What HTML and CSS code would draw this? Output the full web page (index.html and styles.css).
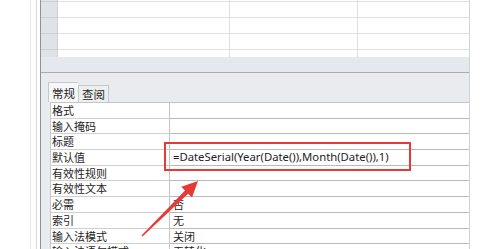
FILE: index.html
```html
<!DOCTYPE html>
<html>
<head>
    <title>表属性 - 默认值</title>
    <meta charset="UTF-8">
    <link rel="stylesheet" href="styles.css">
</head>
<body>
    <div class="window">
        <div class="frame">
            <div class="sheet">
                <div class="grid">
                    <div class="sel r1"></div><div class="cell r1"></div><div class="cell r1"></div><div class="cell r1 last"></div>
                    <div class="sel"></div><div class="cell"></div><div class="cell"></div><div class="cell last"></div>
                    <div class="sel"></div><div class="cell"></div><div class="cell"></div><div class="cell last"></div>
                    <div class="sel"></div><div class="cell"></div><div class="cell"></div><div class="cell last"></div>
                    <div class="sel end"></div><div class="cell end"></div><div class="cell end"></div><div class="cell end last"></div>
                </div>
                <div class="band"></div>

                <div class="props">
                    <div class="tabs">
                        <span class="tab active">常规</span>
                        <span class="tab">查阅</span>
                    </div>
                    <div class="prop-table">
                        <div class="label">格式</div><div class="value"></div>
                        <div class="label">输入掩码</div><div class="value"></div>
                        <div class="label">标题</div><div class="value"></div>
                        <div class="label">默认值</div><div class="value formula">=DateSerial(Year(Date()),Month(Date()),1)</div>
                        <div class="label">有效性规则</div><div class="value"></div>
                        <div class="label">有效性文本</div><div class="value"></div>
                        <div class="label">必需</div><div class="value">否</div>
                        <div class="label">索引</div><div class="value">无</div>
                        <div class="label">输入法模式</div><div class="value">关闭</div>
                        <div class="label">输入法语句模式</div><div class="value">无转化</div>
                    </div>
                </div>
            </div>
        </div>
    </div>

    <!-- annotation: red box + arrow -->
    <div class="callout"></div>
    <svg class="arrow" width="499" height="249" viewBox="0 0 499 249">
        <polygon points="198,181 192,197.6 188.2,193.8 142.5,236.5 141.5,235.5 185,190.6 181.3,186.8" fill="#e63a36"/>
    </svg>
</body>
</html>
```

FILE: styles.css
```css
* { box-sizing: border-box; }
body { margin: 0; background: #fff; height: 249px; overflow: hidden; font-family: "Noto Sans CJK SC", sans-serif; color: #1e1e1e; }

.window { margin-left: 30px; width: 440px; height: 249px; border-left: 1px solid #e6e6e6; padding-left: 5px; }
.frame { height: 100%; border-left: 1px solid #dadada; padding-left: 3px; }
.sheet { height: 100%; border-left: 1px solid #8e939a; border-right: 1px solid #cfd2d6; background: #e9ebee; }

.grid { display: grid; grid-template-columns: 17px 172px 128px 1fr; grid-template-rows: 2px 16px 16px 16px 7px; background: #fff; }
.grid .sel { background: #dfe3e8; border-right: 1px solid #cdd1d6; border-bottom: 1px solid #cdd1d6; }
.grid .cell { border-right: 1px solid #dcdfe3; border-bottom: 1px solid #dcdfe3; }
.grid .last { border-right: none; }
.grid .end { border-bottom: none; }

.band { height: 16px; background: #e5e8ec; border-bottom: 1px solid #a9adb3; }

.props { padding: 9px 0 0 7px; }
.tabs { display: flex; align-items: flex-end; height: 20px; font-size: 11.5px; line-height: 16px; }
.tab { padding: 0 3px; height: 17px; border: 1px solid #c6c8cc; border-bottom: none; background: #eceef0; }
.tab.active { height: 20px; padding-top: 2px; background: #f7f7f7; border-right: none; }

.prop-table { display: grid; grid-template-columns: 119px 299px; grid-auto-rows: 15.7px; margin-left: 2px; background: #fff; border-top: 1px solid #c4c4c4; border-left: 1px solid #c8c8c8; font-size: 11px; line-height: 14.7px; }
.prop-table .label { padding-left: 1px; border-right: 1px solid #c4c4c4; border-bottom: 1px solid #cfcfcf; white-space: nowrap; overflow: hidden; }
.prop-table .value { padding-left: 3px; border-bottom: 1px solid #b9b9b9; white-space: nowrap; overflow: hidden; }
.prop-table .formula { font-family: "Noto Sans", sans-serif; font-size: 11.3px; overflow: visible; }

.callout { position: absolute; left: 164px; top: 142px; width: 247px; height: 29px; border: 2px solid #e53a36; }
.arrow { position: absolute; left: 0; top: 0; pointer-events: none; }
```
